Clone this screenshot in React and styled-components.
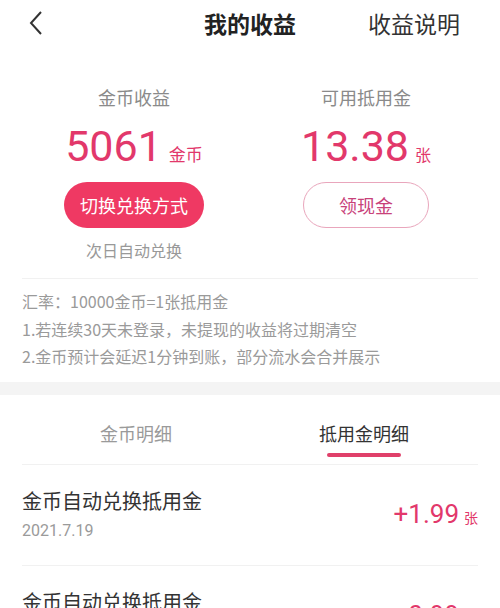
import React from "react";
import styled, { createGlobalStyle } from "styled-components";

const GlobalStyle = createGlobalStyle`
  body {
    margin: 0;
    background: #fff;
    font-family: "Noto Sans CJK SC", "Noto Sans", sans-serif;
    color: #333;
  }
`;

const Page = styled.div`
  width: 500px;
  height: 608px;
  overflow: hidden;
  background: #fff;
`;

const Header = styled.div`
  height: 46px;
  display: grid;
  grid-template-columns: 1fr auto 1fr;
  align-items: center;
  .back {
    padding-left: 28px;
    display: flex;
  }
  h1 {
    margin: 0;
    font-size: 23px;
    font-weight: 700;
    color: #222;
  }
  .help {
    justify-self: end;
    padding-right: 40px;
    font-size: 23px;
    color: #333;
  }
`;

const Summary = styled.div`
  display: grid;
  grid-template-columns: 1fr 1fr;
  padding: 40px 18px 0;
`;

const Column = styled.div`
  display: flex;
  flex-direction: column;
  align-items: center;
`;

const Label = styled.div`
  font-size: 18px;
  line-height: 22px;
  color: #8a8a8a;
`;

const Amount = styled.div`
  margin-top: 13px;
  height: 50px;
  display: flex;
  align-items: baseline;
  color: #e2386b;
  span {
    font-family: Roboto, "Liberation Sans", sans-serif;
    font-size: 43px;
    line-height: 50px;
    font-weight: 400;
  }
  small {
    margin-left: ${(p) => p.gap}px;
    font-size: ${(p) => p.unitSize}px;
  }
`;

const PillButton = styled.button`
  margin-top: 11px;
  height: 46px;
  width: ${(p) => p.width}px;
  border-radius: 23px;
  font-family: inherit;
  font-size: 18px;
  border: ${(p) => (p.outline ? "1.5px solid #e9a6bc" : "none")};
  background: ${(p) => (p.outline ? "#fff" : "#ef3963")};
  color: ${(p) => (p.outline ? "#c8427a" : "#fff")};
`;

const Note = styled.div`
  margin-top: 12px;
  font-size: 16px;
  line-height: 20px;
  color: #999;
`;

const Divider = styled.div`
  margin: 18px 22px 0;
  height: 1px;
  background: #f1f1f1;
`;

const Info = styled.div`
  padding: 9px 22px 11px;
  font-size: 16px;
  line-height: 27.5px;
  color: #9a9a9a;
  p {
    margin: 0;
  }
`;

const Band = styled.div`
  height: 13px;
  background: #f4f4f4;
`;

const Tabs = styled.div`
  display: grid;
  grid-template-columns: 1fr 1fr;
  margin: 0 22px;
  padding-top: 26px;
  border-bottom: 1px solid #f1f1f1;
`;

const Tab = styled.div`
  display: flex;
  flex-direction: column;
  align-items: center;
  height: 43px;
  font-size: 18px;
  line-height: 24px;
  color: ${(p) => (p.active ? "#333" : "#9a9a9a")};
  &::after {
    content: "";
    margin-top: 8px;
    width: 74px;
    height: 4px;
    border-radius: 2px;
    background: ${(p) => (p.active ? "#e0406a" : "transparent")};
  }
`;

const Row = styled.div`
  margin: 0 22px;
  padding: 23px 0 24px;
  display: flex;
  align-items: center;
  justify-content: space-between;
  border-bottom: 1px solid #f1f1f1;
`;

const RowText = styled.div`
  .title {
    font-size: 20px;
    line-height: 26px;
    color: #333;
  }
  .date {
    margin-top: 7px;
    font-family: Roboto, "Liberation Sans", sans-serif;
    font-size: 16px;
    line-height: 20px;
    color: #9a9a9a;
  }
`;

const RowAmount = styled.div`
  display: flex;
  align-items: baseline;
  color: #e2386b;
  span {
    font-family: Roboto, "Liberation Sans", sans-serif;
    font-size: 26px;
  }
  small {
    margin-left: 5px;
    font-size: 14px;
  }
`;

const records = [
  { title: "金币自动兑换抵用金", date: "2021.7.19", value: "+1.99" },
  { title: "金币自动兑换抵用金", date: "2021.7.18", value: "+0.99" },
];

export default function App() {
  return (
    <Page>
      <GlobalStyle />
      <Header>
        <div className="back">
          <svg width="16" height="26" viewBox="0 0 16 26">
            <polyline points="13,2 3,13 13,24" fill="none" stroke="#333" strokeWidth="2" />
          </svg>
        </div>
        <h1>我的收益</h1>
        <div className="help">收益说明</div>
      </Header>

      <Summary>
        <Column>
          <Label>金币收益</Label>
          <Amount unitSize={17} gap={7}>
            <span>5061</span>
            <small>金币</small>
          </Amount>
          <PillButton width={140}>切换兑换方式</PillButton>
          <Note>次日自动兑换</Note>
        </Column>
        <Column>
          <Label>可用抵用金</Label>
          <Amount unitSize={16} gap={6}>
            <span>13.38</span>
            <small>张</small>
          </Amount>
          <PillButton width={126} outline>
            领现金
          </PillButton>
        </Column>
      </Summary>
      <Divider />

      <Info>
        <p>汇率：10000金币=1张抵用金</p>
        <p>1.若连续30天未登录，未提现的收益将过期清空</p>
        <p>2.金币预计会延迟1分钟到账，部分流水会合并展示</p>
      </Info>
      <Band />

      <Tabs>
        <Tab>金币明细</Tab>
        <Tab active>抵用金明细</Tab>
      </Tabs>

      {records.map((r, i) => (
        <Row key={i}>
          <RowText>
            <div className="title">{r.title}</div>
            <div className="date">{r.date}</div>
          </RowText>
          <RowAmount>
            <span>{r.value}</span>
            <small>张</small>
          </RowAmount>
        </Row>
      ))}
    </Page>
  );
}
